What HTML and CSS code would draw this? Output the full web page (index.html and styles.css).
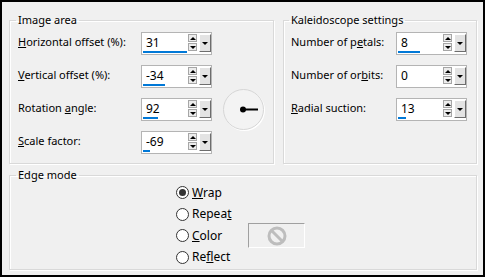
FILE: index.html
```html
<!DOCTYPE html>
<html>
<head>
<meta charset="utf-8">
<link rel="stylesheet" href="styles.css">
</head>
<body>
<div class="window">
  <div class="top">
    <fieldset class="group img">
      <legend>Image area</legend>
      <div class="grid grid-img">
        <label class="lbl"><u>H</u>orizontal offset (%):</label>
        <div class="spin"><div class="edit"><span class="val">31</span><span class="bar" style="width:44px"></span></div><div class="arrows"><span class="arr up"></span><span class="arr down"></span></div><span class="drop"></span></div>
        <span></span>
        <label class="lbl"><u>V</u>ertical offset (%):</label>
        <div class="spin"><div class="edit"><span class="val">-34</span><span class="bar" style="width:22px"></span></div><div class="arrows"><span class="arr up"></span><span class="arr down"></span></div><span class="drop"></span></div>
        <span></span>
        <label class="lbl">Rotation <u>a</u>ngle:</label>
        <div class="spin"><div class="edit"><span class="val">92</span><span class="bar" style="width:15px"></span></div><div class="arrows"><span class="arr up"></span><span class="arr down"></span></div><span class="drop"></span></div>
        <div class="dial"><svg width="41" height="41" viewBox="0 0 41 41"><line x1="20" y1="20.5" x2="35" y2="20.5" stroke="#000" stroke-width="2"/><circle cx="20" cy="20.5" r="3" fill="#000"/></svg></div>
        <label class="lbl"><u>S</u>cale factor:</label>
        <div class="spin"><div class="edit"><span class="val">-69</span><span class="bar" style="width:7px"></span></div><div class="arrows"><span class="arr up"></span><span class="arr down"></span></div><span class="drop"></span></div>
        <span></span>
      </div>
    </fieldset>
    <fieldset class="group kal">
      <legend>Kaleidoscope settings</legend>
      <div class="grid grid-kal">
        <label class="lbl">Number of p<u>e</u>tals:</label>
        <div class="spin"><div class="edit"><span class="val">8</span><span class="bar" style="width:22px"></span></div><div class="arrows"><span class="arr up"></span><span class="arr down"></span></div><span class="drop"></span></div>
        <label class="lbl">Number of or<u>b</u>its:</label>
        <div class="spin"><div class="edit"><span class="val">0</span><span class="bar" style="width:0px"></span></div><div class="arrows"><span class="arr up"></span><span class="arr down"></span></div><span class="drop"></span></div>
        <label class="lbl"><u>R</u>adial suction:</label>
        <div class="spin"><div class="edit"><span class="val">13</span><span class="bar" style="width:8px"></span></div><div class="arrows"><span class="arr up"></span><span class="arr down"></span></div><span class="drop"></span></div>
      </div>
    </fieldset>
  </div>
  <fieldset class="group edge">
    <legend>Edge mode</legend>
    <div class="edge-grid">
      <div class="radio checked"><span class="rb"></span><span><u>W</u>rap</span></div>
      <span></span>
      <div class="radio"><span class="rb"></span><span>Repea<u>t</u></span></div>
      <span></span>
      <div class="radio"><span class="rb"></span><span><u>C</u>olor</span></div>
      <div class="swatch"><svg width="22" height="22" viewBox="0 0 22 22"><circle cx="11" cy="11" r="8" fill="none" stroke="#bdbdbd" stroke-width="3"/><line x1="5.5" y1="5.5" x2="16.5" y2="16.5" stroke="#bdbdbd" stroke-width="3"/></svg></div>
      <div class="radio"><span class="rb"></span><span>Re<u>f</u>lect</span></div>
      <span></span>
    </div>
  </fieldset>
</div>
</body>
</html>
```
FILE: styles.css
```css
html, body {
  margin: 0;
  padding: 0;
  background: #f0f0f0;
}
body {
  font-family: "Noto Sans", "Open Sans", sans-serif;
  font-size: 11px;
  color: #000;
}
.window {
  width: 485px;
  height: 277px;
  box-sizing: border-box;
  border: 2px solid #000;
  background: #f0f0f0;
  padding: 10px 6px 4px 7px;
  display: flex;
  flex-direction: column;
  gap: 3px;
}
.top {
  display: flex;
  gap: 9px;
  height: 152px;
}
.group {
  margin: 0;
  min-width: 0;
  box-sizing: border-box;
  border: 1px solid #d9d9d9;
  box-shadow: 1px 1px 0 #fff, inset 1px 1px 0 #fff;
  padding: 0 7px 0 8px;
}
.group legend {
  padding: 0 2px;
  margin-left: -2px;
  line-height: 16px;
  font-size: 11px;
}
.img {
  width: 265px;
  height: 152px;
}
.kal {
  width: 194px;
  height: 152px;
  padding-left: 7px;
}
.edge {
  width: 468px;
  height: 103px;
}
.grid {
  display: grid;
  row-gap: 10px;
  margin-top: 4px;
  align-items: center;
}
.grid-img {
  grid-template-columns: 123px 71px auto;
}
.grid-kal {
  grid-template-columns: 105px 71px;
}
.lbl {
  line-height: 16px;
  margin-top: -4px;
  white-space: nowrap;
}
.spin {
  display: flex;
  width: 71px;
  height: 23px;
  box-sizing: border-box;
  border: 1px solid #b4b4b4;
  background: #fff;
}
.edit {
  width: 45px;
  display: flex;
  flex-direction: column;
  padding: 0 0 1px 1px;
}
.val {
  padding-left: 3px;
  line-height: 16px;
  margin-top: 2px;
  font-size: 12px;
}
.bar {
  display: block;
  height: 3px;
  margin-top: auto;
  background: #0078d7;
}
.arrows {
  width: 11px;
  display: flex;
  flex-direction: column;
  gap: 1px;
  padding: 1px 0 0 1px;
}
.arr {
  width: 9px;
  height: 8px;
  box-sizing: border-box;
  border: 1px solid #a6a6a6;
  background: #ececec;
  display: flex;
  align-items: center;
  justify-content: center;
}
.arr::after {
  content: "";
  width: 0;
  height: 0;
  border-left: 3px solid transparent;
  border-right: 3px solid transparent;
}
.up::after {
  border-bottom: 3px solid #000;
}
.down::after {
  border-top: 3px solid #000;
}
.drop {
  width: 12px;
  height: 18px;
  margin-top: 1px;
  box-sizing: border-box;
  border: 1px solid;
  border-color: #fff #6d6d6d #6d6d6d #fff;
  background: #e3e3e3;
  display: flex;
  align-items: center;
  justify-content: center;
}
.drop::after {
  content: "";
  width: 0;
  height: 0;
  border-left: 3px solid transparent;
  border-right: 3px solid transparent;
  border-top: 3px solid #000;
}
.dial {
  width: 41px;
  height: 41px;
  box-sizing: border-box;
  border-radius: 50%;
  border: 1px solid #d6d6d6;
  background: #f3f3f3;
  box-shadow: 1px 1px 0 #fff;
  margin: -9px 0 -9px 11px;
}
.dial svg {
  display: block;
  margin: -1px;
}
.edge-grid {
  display: grid;
  grid-template-columns: 72px auto;
  grid-auto-rows: 21.5px;
  align-items: center;
  margin: -1px 0 0 158px;
}
.radio {
  display: flex;
  align-items: center;
  gap: 3px;
  line-height: 16px;
  font-size: 12px;
}
.rb {
  width: 13px;
  height: 13px;
  box-sizing: border-box;
  border-radius: 50%;
  border: 1px solid #333;
  background: #fff;
  display: flex;
  align-items: center;
  justify-content: center;
}
.checked .rb::after {
  content: "";
  width: 7px;
  height: 7px;
  border-radius: 50%;
  background: #333;
}
.swatch {
  width: 57px;
  height: 25px;
  box-sizing: border-box;
  border: 1px solid;
  border-color: #a0a0a0 #fff #fff #a0a0a0;
  background: #f0f0f0;
  display: flex;
  align-items: center;
  justify-content: center;
}
```
